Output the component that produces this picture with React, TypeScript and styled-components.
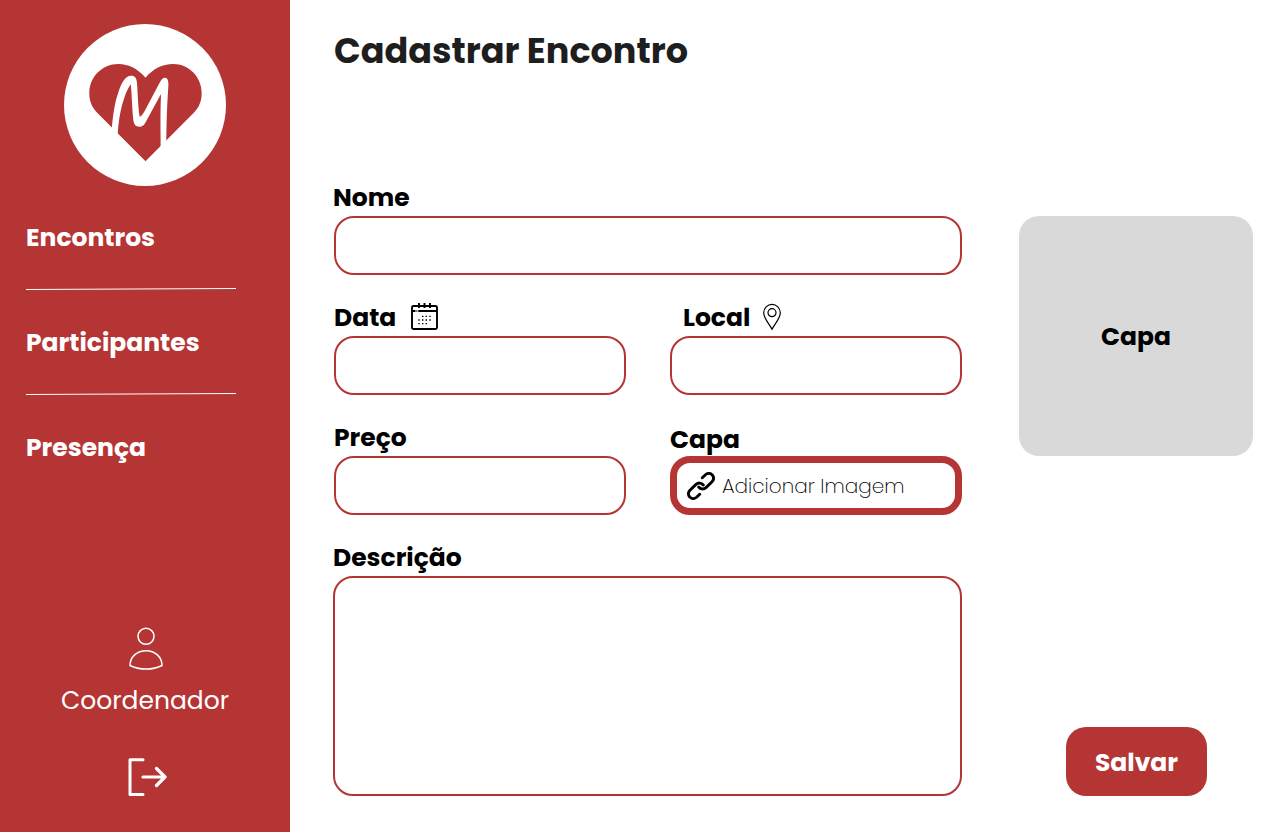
import React from "react";
import styled, { createGlobalStyle } from "styled-components";

const RED = "#b53535";

const GlobalStyle = createGlobalStyle`
  * { box-sizing: border-box; }
  body { margin: 0; background: #fff; font-family: Poppins, Inter, sans-serif; }
`;

const Page = styled.div`
  display: flex;
  width: 1280px;
  height: 832px;
  overflow: hidden;
  background: #fff;
`;

const Sidebar = styled.aside`
  display: flex;
  flex-direction: column;
  align-items: center;
  flex: 0 0 290px;
  padding-top: 24px;
  background: ${RED};
  color: #fff;
`;

const Nav = styled.nav`
  display: flex;
  flex-direction: column;
  align-self: stretch;
  padding-left: 26px;
  margin-top: 32px;
`;

const NavItem = styled.a`
  height: 39px;
  line-height: 39px;
  font-size: 25px;
  font-weight: 700;
  white-space: nowrap;
`;

const Divider = styled.svg`
  display: block;
  margin: 31px 0 33px;
`;

const Account = styled.div`
  display: flex;
  flex-direction: column;
  align-items: center;
  margin-top: 160px;
`;

const AccountIcon = styled.svg`
  margin-left: 2px;
`;

const Role = styled.span`
  height: 39px;
  margin-top: 11px;
  line-height: 39px;
  font-size: 25px;
  white-space: nowrap;
`;

const LogoutIcon = styled.svg`
  margin: 37px 0 0 3px;
`;

const Main = styled.main`
  display: flex;
  flex-direction: column;
  flex: 1;
  padding: 24px 27px 0 44px;
`;

const Title = styled.h1`
  margin: 0;
  height: 54px;
  line-height: 54px;
  font-size: 35px;
  font-weight: 700;
  color: #1e1e1e;
  white-space: nowrap;
`;

const Content = styled.div`
  display: flex;
  justify-content: space-between;
  margin-top: 99px;
`;

const Form = styled.form`
  display: grid;
  grid-template-columns: 292px 292px;
  column-gap: 44px;
  row-gap: 22px;
`;

const Field = styled.div<{ $wide?: boolean }>`
  display: flex;
  flex-direction: column;
  grid-column: ${(p) => (p.$wide ? "1 / -1" : "auto")};
`;

const Label = styled.label<{ $indent?: number; $drop?: number }>`
  display: flex;
  height: 39px;
  margin-left: ${(p) => p.$indent ?? 0}px;
  padding-top: ${(p) => p.$drop ?? 0}px;
  line-height: 41px;
  font-size: 25px;
  font-weight: 700;
  color: #000;
  white-space: nowrap;
`;

const LabelIcon = styled.svg<{ $gap: number }>`
  margin: 6px 0 0 ${(p) => p.$gap}px;
`;

const Input = styled.input`
  width: 100%;
  height: 59px;
  padding: 0 16px;
  border: 2px solid ${RED};
  border-radius: 20px;
  background: #fff;
  font: inherit;
  outline: none;
`;

const TextArea = styled.textarea`
  display: block;
  width: 629px;
  height: 220px;
  margin-left: -1px;
  padding: 16px;
  border: 2px solid ${RED};
  border-radius: 20px;
  background: #fff;
  font: inherit;
  resize: none;
  outline: none;
`;

const UploadButton = styled.button`
  display: flex;
  align-items: center;
  height: 59px;
  padding: 0 0 0 10px;
  border: 7px solid ${RED};
  border-radius: 20px;
  background: #fff;
  color: #000;
  font-family: inherit;
  font-size: 20px;
  font-weight: 275;
  gap: 7px;
  white-space: nowrap;
`;

const UploadText = styled.span`
  line-height: 30px;
`;

const Side = styled.div`
  display: flex;
  flex-direction: column;
  align-items: center;
  justify-content: space-between;
  width: 234px;
  padding-top: 39px;
`;

const Cover = styled.div`
  display: flex;
  align-items: center;
  justify-content: center;
  width: 234px;
  height: 240px;
  padding-top: 2px;
  border-radius: 20px;
  background: #d9d9d9;
  color: #000;
  font-size: 25px;
  font-weight: 700;
`;

const SaveButton = styled.button`
  width: 141px;
  height: 69px;
  padding: 2px 0 0 1px;
  border: 0;
  border-radius: 20px;
  background: ${RED};
  color: #fff;
  font-family: inherit;
  font-size: 25px;
  font-weight: 700;
`;

const Logo = () => (
  <svg width="162" height="162" viewBox="0 0 162 162" fill="none">
    <circle cx="81" cy="81" r="81" fill="#fff" />
    <path
      d="M81.500 53.700C74 45 65 40 54.300 40C38 40 25.300 53 25.300 69.300C25.300 77 28 83.500 32.700 88.300L81.500 137.300L130.300 88.300C135 83.500 137.700 77 137.700 69.300C137.700 53 125 40 109.300 40C98 40 89 45 81.500 53.700Z"
      fill={RED}
    />
    <path
      d="M47.700 106C48.500 94 50.500 80 53.500 71C57 58.500 61.500 51.800 67 51.700C71 51.600 72.500 54 73 59C73.700 67 74 84 75.700 92.700C77.500 92.200 79.500 89.500 82 84.500L96 58C98 54.500 99.500 53.500 101 53.700C103.500 54 104.500 56 104.400 61C103.500 76 102.300 95 102.300 130H96.700C96.700 110 96 91 97 70L82 97.500C80 101.500 78.500 102.700 75.500 102.700C71.500 102.700 69.800 100.500 69.200 95C68 83 67.800 68 66.700 60.300C60.500 69 55 88 53.700 109.700V120L46 112Z"
      fill="#fff"
    />
  </svg>
);

const NavDivider = () => (
  <Divider width="210" height="2" viewBox="0 0 210 2">
    <path d="M0 1.500L210 0.500" stroke="#fff" strokeWidth="1" />
  </Divider>
);

const CalendarIcon = () => (
  <LabelIcon $gap={15} width="28" height="28" viewBox="0 0 28 28" fill="none" stroke="#000">
    <rect x="1" y="3" width="25" height="23" rx="1.500" strokeWidth="1.900" />
    <path d="M8 0V5M13.500 0V5M19 0V5" strokeWidth="1.900" />
    <path d="M1 8H4.500M5.500 8H6.300M7.300 8H26" strokeWidth="1.800" />
    <path
      d="M11 13.400h1.400M14.600 13.400h1.400M18.300 13.400h1.400M7.300 17h1.400M11 17h1.400M14.600 17h1.400M18.300 17h1.400M7.300 20.600h1.400M11 20.600h1.400M14.600 20.600h1.400"
      strokeWidth="1.400"
    />
  </LabelIcon>
);

const PinIcon = () => (
  <LabelIcon $gap={13} width="18" height="28" viewBox="0 0 18 28" fill="none" stroke="#000" strokeWidth="1.200">
    <path d="M9 26.200C6.500 21 0.700 15.500 0.700 9.700A8.300 8.300 0 0 1 17.300 9.700C17.300 15.500 11.500 21 9 26.200Z" />
    <circle cx="9" cy="9.700" r="4" />
  </LabelIcon>
);

const LinkIcon = () => (
  <svg width="28" height="28" viewBox="0 0 28 28" fill="none" stroke="#000" strokeWidth="2.900" strokeLinecap="round">
    <path d="M15.300 5.800L18.200 3C20.500 0.900 23.300 0.900 25.100 2.900C27.100 4.900 27.100 7.700 25 9.800L19 15.600C16.500 17.700 13.500 17.200 11.700 15" />
    <path d="M12.700 22.200L9.800 25C7.500 27.100 4.700 27.100 2.900 25.100C0.900 23.100 0.900 20.300 3 18.200L9 12.400C11.500 10.300 14.500 10.800 16.300 13" />
  </svg>
);

const UserIcon = () => (
  <AccountIcon width="34" height="43" viewBox="0 0 34 43" fill="none" stroke="#fff" strokeWidth="1.500">
    <circle cx="17" cy="9.300" r="8" />
    <path d="M1 38.500C1 30 8 23.700 17 23.700S33 30 33 38.500C24 43.200 10 43.200 1 38.500Z" strokeLinejoin="round" />
  </AccountIcon>
);

export default function App() {
  return (
    <>
      <GlobalStyle />
      <Page>
        <Sidebar>
          <Logo />
          <Nav>
            <NavItem>Encontros</NavItem>
            <NavDivider />
            <NavItem>Participantes</NavItem>
            <NavDivider />
            <NavItem>Presença</NavItem>
          </Nav>
          <Account>
            <UserIcon />
            <Role>Coordenador</Role>
            <LogoutIcon width="40" height="40" viewBox="0 0 40 40" fill="none" stroke="#fff" strokeWidth="3" strokeLinecap="round" strokeLinejoin="round">
              <path d="M16 2.800H3V37.500H16" />
              <path d="M16 20H38M29.500 11.500L38 20L29.500 28.500" strokeWidth="3.200" />
            </LogoutIcon>
          </Account>
        </Sidebar>
        <Main>
          <Title>Cadastrar Encontro</Title>
          <Content>
            <Form>
              <Field $wide>
                <Label $indent={-1}>Nome</Label>
                <Input />
              </Field>
              <Field>
                <Label>
                  Data
                  <CalendarIcon />
                </Label>
                <Input />
              </Field>
              <Field>
                <Label $indent={13}>
                  Local
                  <PinIcon />
                </Label>
                <Input />
              </Field>
              <Field>
                <Label>Preço</Label>
                <Input />
              </Field>
              <Field>
                <Label $drop={2}>Capa</Label>
                <UploadButton type="button">
                  <LinkIcon />
                  <UploadText>Adicionar Imagem</UploadText>
                </UploadButton>
              </Field>
              <Field $wide>
                <Label $indent={-1}>Descrição</Label>
                <TextArea />
              </Field>
            </Form>
            <Side>
              <Cover>Capa</Cover>
              <SaveButton type="button">Salvar</SaveButton>
            </Side>
          </Content>
        </Main>
      </Page>
    </>
  );
}
